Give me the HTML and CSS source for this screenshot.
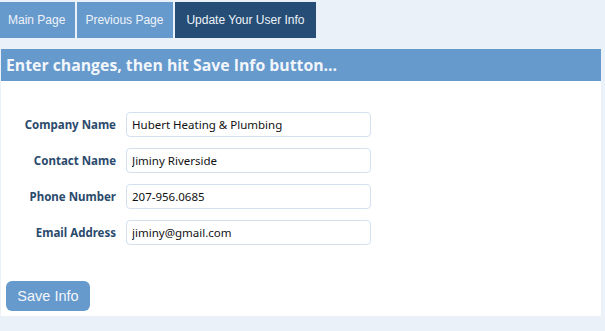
FILE: index.html
```html
<!DOCTYPE html>
<html lang="en">
<head>
    <meta charset="UTF-8">
    <title>Update Your User Info</title>
    <link rel="stylesheet" href="styles.css">
</head>
<body>
    <div class="tabs">
        <a class="tab" href="#">Main Page</a>
        <a class="tab" href="#">Previous Page</a>
        <a class="tab active" href="#">Update Your User Info</a>
    </div>

    <div class="panel">
        <h2 class="panel-title">Enter changes, then hit Save Info button...</h2>
        <form class="info-form" onsubmit="return false;">
            <div class="row">
                <label for="company">Company Name</label>
                <input type="text" id="company" value="Hubert Heating &amp; Plumbing">
            </div>
            <div class="row">
                <label for="contact">Contact Name</label>
                <input type="text" id="contact" value="Jiminy Riverside">
            </div>
            <div class="row">
                <label for="phone">Phone Number</label>
                <input type="text" id="phone" value="207-956.0685">
            </div>
            <div class="row">
                <label for="email">Email Address</label>
                <input type="text" id="email" value="jiminy@gmail.com">
            </div>
            <button type="button" class="save-btn">Save Info</button>
        </form>
    </div>
</body>
</html>
```

FILE: styles.css
```css
body {
    margin: 0;
    padding: 0;
    background-color: #eaf1f9;
    font-family: "Liberation Sans", Arial, sans-serif;
}

.tabs {
    display: flex;
    gap: 2px;
    margin-top: 2px;
}

.tab {
    display: block;
    height: 36px;
    line-height: 36px;
    padding: 0 10px 0 8px;
    background-color: #6699cc;
    color: #eef3f9;
    font-size: 12px;
    text-decoration: none;
}

.tab.active {
    background-color: #264d75;
    padding: 0 11px;
}

.panel {
    width: 600px;
    margin: 11px 0 0 1px;
    background-color: #ffffff;
}

.panel-title {
    margin: 0;
    height: 32px;
    line-height: 32px;
    padding-left: 5px;
    background-color: #6699cc;
    color: #f2f6fb;
    font-family: "Open Sans", sans-serif;
    font-size: 15.8px;
    font-weight: bold;
}

.info-form {
    padding: 31px 0 5px 5px;
}

.row {
    display: flex;
    align-items: center;
    margin-bottom: 11px;
}

.row label {
    width: 110px;
    text-align: right;
    margin-right: 10px;
    color: #2a4a6c;
    font-family: "Noto Sans", sans-serif;
    font-size: 11.5px;
    font-weight: bold;
}

.row input {
    width: 245px;
    height: 25px;
    box-sizing: border-box;
    padding: 0 5px;
    border: 1px solid #d3e1f1;
    border-radius: 4px;
    color: #111111;
    font-family: "Noto Sans", sans-serif;
    font-size: 11.5px;
}

.save-btn {
    margin-top: 25px;
    width: 84px;
    height: 30px;
    background-color: #6699cc;
    color: #f2f6fb;
    border: none;
    border-radius: 6px;
    font-family: "Liberation Sans", Arial, sans-serif;
    font-size: 14.5px;
    cursor: pointer;
}
```
